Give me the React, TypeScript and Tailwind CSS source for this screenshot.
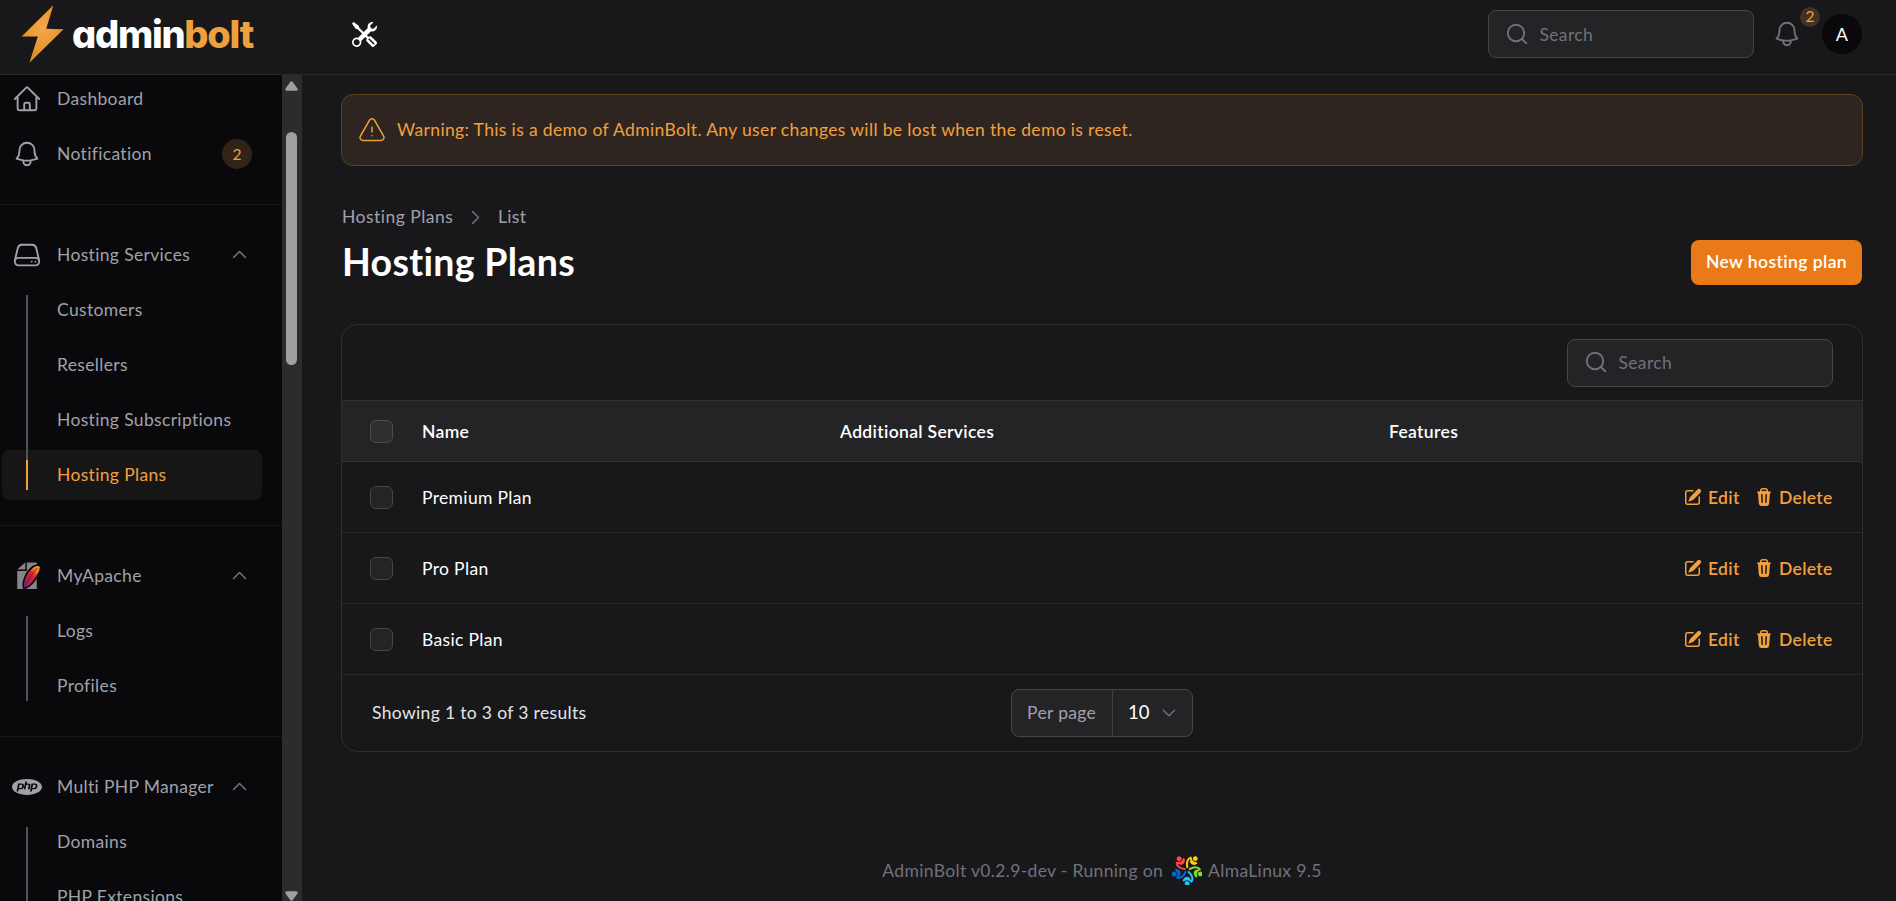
import type { ReactNode } from "react";
import { BsTools } from "react-icons/bs";
import {
  HiMiniPencilSquare,
  HiMiniTrash,
  HiOutlineBell,
  HiOutlineExclamationTriangle,
  HiOutlineHome,
  HiOutlineServer,
} from "react-icons/hi2";
import { SiPhp } from "react-icons/si";

type Direction = "up" | "down" | "right";

const chevrons: Record<Direction, string> = {
  up: "m4.5 15.75 7.5-7.5 7.5 7.5",
  down: "m19.5 8.25-7.5 7.5-7.5-7.5",
  right: "m8.25 4.5 7.5 7.5-7.5 7.5",
};

function Chevron({ dir, className }: { dir: Direction; className: string }) {
  return (
    <svg viewBox="0 0 24 24" fill="none" stroke="currentColor" strokeWidth="2" className={className}>
      <path strokeLinecap="round" strokeLinejoin="round" d={chevrons[dir]} />
    </svg>
  );
}

function SearchIcon() {
  return (
    <svg viewBox="0 0 25 25" fill="none" stroke="currentColor" strokeWidth="1.9" className="size-[25px] text-[#71717a]">
      <circle cx="11" cy="11" r="8.2" />
      <path strokeLinecap="round" d="m17 17 4.3 4.3" />
    </svg>
  );
}

function SearchBox() {
  return (
    <div className="flex h-[48px] w-[266px] items-center rounded-lg border border-[#464649] bg-[#242427] pl-4">
      <SearchIcon />
      <span className="ml-[9.5px] text-[#71717a]">Search</span>
    </div>
  );
}

function ApacheIcon() {
  return (
    <svg viewBox="0 0 30 30" className="size-[30px]">
      <defs>
        <linearGradient id="feather" x1="0.85" y1="0" x2="0.15" y2="1">
          <stop offset="0" stopColor="#f9a51a" />
          <stop offset="0.22" stopColor="#ee7623" />
          <stop offset="0.42" stopColor="#d8213f" />
          <stop offset="0.72" stopColor="#b81c49" />
          <stop offset="1" stopColor="#6b2a83" />
        </linearGradient>
      </defs>
      <path d="M13.3 1.5V8.6H5.2z" fill="#85858a" />
      <path d="M14.8 1.5h10v26.5H5.2V10h9.6z" fill="#85858a" />
      <path
        d="M11.8 27.5C9.600 20.500 14.500 10.500 20.500 6 23 4.200 27.500 3.500 28.400 5.500 29.600 9.500 24 18 20.500 22 17 25.800 13.500 27.300 11.800 27.500z"
        fill="url(#feather)"
        stroke="#09090b"
        strokeWidth="1.6"
      />
      <path d="M12.200 26.500C16 19 20 12 25.500 7" fill="none" stroke="#5e1b3c" strokeWidth="0.8" />
    </svg>
  );
}

const almaPetals = [
  { rotate: 0, color: "#ffcb12" },
  { rotate: 72, color: "#86da2f" },
  { rotate: 144, color: "#24c2ff" },
  { rotate: 216, color: "#0069da" },
  { rotate: 288, color: "#ff4649" },
];

function AlmaLogo() {
  return (
    <svg viewBox="0 0 30 30" className="size-[30px]">
      {almaPetals.map((p) => (
        <g key={p.color} transform={`rotate(${p.rotate} 15.2 14.8)`}>
          <circle cx="23.300" cy="3.700" r="2.400" fill={p.color} />
          <path
            d="M15.300 12.200C14.300 8 15.300 3.600 18.700 2.600C18.700 6 20.500 8 24.300 8.200C21.600 9.600 19.800 8.600 18.800 6.800"
            fill="none"
            stroke={p.color}
            strokeWidth="2"
            strokeLinecap="round"
            strokeLinejoin="round"
          />
        </g>
      ))}
    </svg>
  );
}

function Bolt() {
  return (
    <svg viewBox="0 0 44 58" className="h-[58px] w-[44px]">
      <defs>
        <radialGradient id="bolt" cx="0.5" cy="0.4" r="0.6">
          <stop offset="0" stopColor="#f4a74a" />
          <stop offset="0.5" stopColor="#eb9a36" />
          <stop offset="1" stopColor="#e08a1c" />
        </radialGradient>
      </defs>
      <path d="M32.300 0.200 25.300 23.800 42.600 24.200 8.400 57.800 16.800 31.500H.6z" fill="url(#bolt)" />
    </svg>
  );
}

function NavRow({ icon, label, children }: { icon: ReactNode; label: string; children?: ReactNode }) {
  return (
    <div className="flex h-[50px] items-center">
      <span className="flex size-[30px] shrink-0 items-center justify-center text-[#a1a1aa]">{icon}</span>
      <span className="ml-[15px] flex-1 pb-px">{label}</span>
      {children}
    </div>
  );
}

function NavGroup({ icon, label, items, active }: { icon: ReactNode; label: string; items: string[]; active?: string }) {
  return (
    <section className="border-t border-[#18181b] py-[25px] pr-5 pl-3">
      <NavRow icon={icon} label={label}>
        <Chevron dir="up" className="mr-[13px] mb-px size-[19px] text-[#71717a]" />
      </NavRow>
      <ul>
        {items.map((item, i) => {
          const on = item === active;
          const first = i === 0;
          const last = i === items.length - 1;
          return (
            <li
              key={item}
              className={`mt-[5px] -ml-2.5 flex h-[50px] items-center rounded-lg pl-2.5 ${on ? "bg-[#161617] text-[#f2a03d]" : ""}`}
            >
              <span className="flex h-[50px] w-[30px] shrink-0 justify-center">
                <span
                  className={`w-0.5 ${on ? "bg-[#f2a03d]" : "bg-[#52525b]"} ${
                    on ? "mt-2.5 h-[30px]" : first ? "mt-2.5 h-[50px]" : last ? "-mt-1.5 h-[46px]" : "-mt-1 h-[69px]"
                  }`}
                />
              </span>
              <span className="ml-[15px] pb-px">{item}</span>
            </li>
          );
        })}
      </ul>
    </section>
  );
}

function Sidebar() {
  return (
    <aside className="flex w-[302px] shrink-0 overflow-hidden">
      <nav className="w-[282px] overflow-hidden bg-[#09090b] text-[#a1a1aa]">
        <div className="-mt-px pr-5 pb-[25px] pl-3">
          <NavRow icon={<HiOutlineHome className="size-[30px]" />} label="Dashboard" />
          <div className="h-[5px]" />
          <NavRow icon={<HiOutlineBell className="size-[30px]" />} label="Notification">
            <span className="mr-2.5 flex size-[30px] items-center justify-center rounded-full bg-[#312318] text-[15.5px] tracking-normal text-[#f2a03d]">
              2
            </span>
          </NavRow>
        </div>
        <NavGroup
          icon={<HiOutlineServer className="size-[30px]" />}
          label="Hosting Services"
          items={["Customers", "Resellers", "Hosting Subscriptions", "Hosting Plans"]}
          active="Hosting Plans"
        />
        <NavGroup icon={<ApacheIcon />} label="MyApache" items={["Logs", "Profiles"]} />
        <NavGroup
          icon={<SiPhp className="size-[30px]" />}
          label="Multi PHP Manager"
          items={["Domains", "PHP Extensions"]}
        />
      </nav>
      <div className="flex w-5 flex-col items-center justify-between bg-[#2c2c2c] pt-1.5 pr-px">
        <div className="flex flex-col items-center">
          <svg viewBox="0 0 13 10" className="h-2.5 w-[13px]" fill="#9f9f9f">
            <path d="M5.6.6Q6.5-.3 7.4.6L12.500 7.500Q13 9.700 11.500 9.700H1.500Q0 9.700.5 7.500z" />
          </svg>
          <div className="mt-[41px] h-[233px] w-[11px] rounded-full bg-[#9f9f9f]" />
        </div>
        <svg viewBox="0 0 13 10" className="h-2.5 w-[13px]" fill="#9f9f9f">
          <path d="M5.600 9.400Q6.500 10.300 7.400 9.400L12.500 2.500Q13 .3 11.500.3H1.500Q0 .3.5 2.500z" />
        </svg>
      </div>
    </aside>
  );
}

function Header() {
  return (
    <header className="flex h-[75px] shrink-0 items-center border-b border-[#29292c] pr-[34px] pb-[6px] pl-[21px]">
      <Bolt />
      <span className="ml-[7px] w-[185px] text-[38px] leading-none font-extrabold tracking-[-1.25px] text-white [font-family:Inter,sans-serif] [font-feature-settings:'cv11']">
        admin<span className="text-[#efa03e]">bolt</span>
      </span>
      <BsTools className="ml-[95px] size-[25px] text-white" />
      <div className="flex-1" />
      <SearchBox />
      <div className="relative ml-[18px] size-[30px]">
        <HiOutlineBell className="size-[30px] text-[#71717a]" />
        <span className="absolute -top-[12px] left-[28px] flex size-5 items-center justify-center rounded-full bg-[#443122] text-[15.5px] leading-none tracking-normal text-[#f2a03d]">
          2
        </span>
      </div>
      <span className="ml-5 flex size-10 items-center justify-center rounded-full bg-[#09090b] text-[18px] text-white">
        A
      </span>
    </header>
  );
}

function Checkbox({ className }: { className: string }) {
  return <span className={`block size-[23px] rounded-[6px] border ${className}`} />;
}

const columns = "grid grid-cols-[80px_418px_549px_1fr] items-center";

function PlansTable() {
  return (
    <section className="mt-[38px] h-[428px] overflow-hidden rounded-2xl border border-[#2f2f32]">
      <div className="flex h-[75px] items-center justify-end pr-[29px]">
        <SearchBox />
      </div>
      <div className={`${columns} h-[62px] border-y border-[#313134] bg-[#242427] font-semibold text-white`}>
        <Checkbox className="ml-[28px] border-[#4c4c4f] bg-[#2f2f32]" />
        <span>Name</span>
        <span>Additional Services</span>
        <span>Features</span>
      </div>
      {["Premium Plan", "Pro Plan", "Basic Plan"].map((name) => (
        <div key={name} className={`${columns} h-[71px] border-b border-[#29292c]`}>
          <Checkbox className="ml-[28px] border-[#464649] bg-[#242427]" />
          <span className="text-white">{name}</span>
          <span />
          <div className="flex items-center justify-end pr-[30px] font-semibold text-[#f2a03d]">
            <HiMiniPencilSquare className="size-5" />
            <span className="ml-[5px] w-[32px]">Edit</span>
            <HiMiniTrash className="ml-[14px] size-5" />
            <span className="ml-[5px] w-[53px]">Delete</span>
          </div>
        </div>
      ))}
      <div className="grid h-[75px] grid-cols-[669px_182px] items-center">
        <span className="pl-[30px] text-[#e4e4e7]">Showing 1 to 3 of 3 results</span>
        <div className="flex h-[48px] items-stretch rounded-lg border border-[#464649] bg-[#242427]">
          <span className="flex w-[101px] items-center border-r border-[#3f3f42] pl-[15px] text-[#a1a1aa]">
            Per page
          </span>
          <span className="flex flex-1 items-center pl-[15px] text-[18.5px] tracking-normal text-white">
            10
            <Chevron dir="down" className="ml-[11px] size-[18px] text-[#71717a]" />
          </span>
        </div>
      </div>
    </section>
  );
}

export default function App() {
  return (
    <div className="flex h-[901px] flex-col overflow-hidden bg-[#18181b] text-[17.5px] leading-[25px] tracking-[0.34px] [font-family:Lato,sans-serif]">
      <Header />
      <div className="flex min-h-0 flex-1">
        <Sidebar />
        <main className="flex-1 pr-[33px] pl-[39px]">
          <div className="mt-[19px] flex h-[72px] items-center rounded-xl border border-[#59401f] bg-[#2e2520] pl-[15px] text-[#f2a03d]">
            <HiOutlineExclamationTriangle className="mt-px size-[30px]" strokeWidth={1.2} />
            <span className="ml-[10px] pb-px tracking-[0.36px]">
              Warning: This is a demo of AdminBolt. Any user changes will be lost when the demo is reset.
            </span>
          </div>
          <div className="mt-[38px] flex items-center text-[#a1a1aa]">
            <span className="ml-px w-[124px] tracking-[0.48px]">Hosting Plans</span>
            <Chevron dir="right" className="mt-px size-[19px] text-[#71717a]" />
            <span className="ml-[13px]">List</span>
          </div>
          <div className="mt-[10px] flex h-[46px] items-center justify-between">
            <h1 className="pb-px pl-px text-[37.5px] leading-[45px] font-bold tracking-[0.3px] text-white">
              Hosting Plans
            </h1>
            <button className="mr-px h-[45px] w-[171px] rounded-lg bg-[#ea7a17] pb-px font-semibold tracking-[0.42px] text-white">
              New hosting plan
            </button>
          </div>
          <div className="h-px" />
          <PlansTable />
          <footer className="mt-[103px] flex items-center justify-center text-[#71717a]">
            <span>AdminBolt v0.2.9-dev - Running on</span>
            <span className="mr-[6px] ml-[9px]">
              <AlmaLogo />
            </span>
            <span>AlmaLinux 9.5</span>
          </footer>
        </main>
      </div>
    </div>
  );
}
